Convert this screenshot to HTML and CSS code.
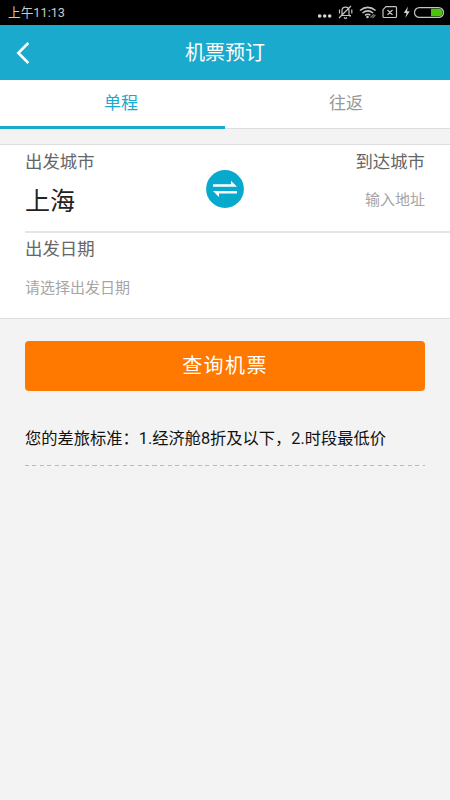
FILE: index.html
```html
<!DOCTYPE html>
<html lang="zh-CN">
<head>
	<title>机票预订</title>
	<meta charset="utf-8">
	<meta name="viewport" content="width=device-width,initial-scale=1">
	<link rel="stylesheet" href="styles.css">
</head>
<body>
	<div class="status">
		<span class="time">上午11:13</span>
		<svg class="status-icons" width="132" height="25" viewBox="0 0 132 25" fill="none" stroke="#c4c4c4" stroke-width="1.2">
			<!-- more -->
			<g fill="#d4d4d4" stroke="none">
				<circle cx="1.7" cy="16" r="1.8"/>
				<circle cx="6.7" cy="16" r="1.8"/>
				<circle cx="11.7" cy="16" r="1.8"/>
			</g>
			<!-- muted bell -->
			<path d="M22.500 15.500h10.500M24 15v-4.500q0-3.300 3.500-3.300t3.500 3.300v4.500l1.500 1.500M26 17.500q1.500 1.800 3 0M33 6l-12 12M21.500 9.500v4M33.800 9.500v4"/>
			<!-- wifi -->
			<g stroke-width="1.6">
				<path d="M42 10.500q7.800-6.400 15.600 0M44.500 13q5.300-4.400 10.600 0M47 15.400q2.800-2.200 5.400-.2"/>
			</g>
			<circle cx="49.500" cy="17" r="1.300" fill="#c4c4c4" stroke="none"/>
			<path stroke="#777" d="M52.500 17.500l3.500-3.200M54.500 18l3-3"/>
			<!-- no sim -->
			<path d="M68 6.700h9.500q1 0 1 1v8.800q0 1-1 1h-11.500q-1 0-1-1v-6.800zM69.500 10l5 4.800M74.500 10l-5 4.800"/>
			<!-- battery -->
			<path d="M90 6.500l-4.200 6.500h2.700l-1.200 5 4.400-6.700h-2.700z" fill="#d4d4d4" stroke="none"/>
			<rect x="96.500" y="7.600" width="29" height="9.800" rx="4.900"/>
			<path d="M113 8.800h8q3.500 0 3.500 3.700t-3.500 3.700h-8z" fill="#4cc40b" stroke="none"/>
		</svg>
	</div>
	<header class="navbar">
		<svg class="back" width="14" height="22" viewBox="0 0 14 22" fill="none" stroke="#fff" stroke-width="2.600">
			<path d="M12.300 1L2.300 11l10 10"/>
		</svg>
		<h1>机票预订</h1>
	</header>
	<nav class="tabs">
		<a class="tab active">单程</a>
		<a class="tab">往返</a>
	</nav>
	<section class="form">
		<div class="cities">
			<div class="city">
				<span class="label">出发城市</span>
				<span class="value">上海</span>
			</div>
			<svg class="swap" width="38" height="38" viewBox="0 0 38 38">
				<circle cx="19" cy="19" r="18.900" fill="#07aacd"/>
				<path fill="#fff" d="M7 14.300h18v-3.500l6 6H7zM31 23.500H13v3.500l-6-6h24z"/>
			</svg>
			<div class="city to">
				<span class="label">到达城市</span>
				<span class="hint">输入地址</span>
			</div>
		</div>
		<div class="date">
			<span class="label">出发日期</span>
			<span class="hint">请选择出发日期</span>
		</div>
	</section>
	<button class="search">查询机票</button>
	<p class="standard">您的差旅标准：1.经济舱8折及以下，2.时段最低价</p>
</body>
</html>
```
FILE: styles.css
```css
* {
	box-sizing: border-box;
}

body {
	background: #f3f3f3;
	font-family: Roboto, "Noto Sans CJK SC", sans-serif;
	margin: 0;
	min-height: 800px;
}

.status {
	background: #000;
	color: #c8c8c8;
	display: flex;
	height: 25px;
	justify-content: space-between;
	padding-left: 8px;
}

.time {
	font-size: 12.7px;
	line-height: 25px;
}

.navbar {
	align-items: center;
	background: #19aacd;
	display: grid;
	grid-template-columns: 34px 1fr 34px;
	height: 55px;
	padding: 0 16px;
}

.navbar h1 {
	color: #fff;
	font-size: 20px;
	font-weight: 400;
	line-height: 54px;
	margin: 0;
	text-align: center;
}

.tabs {
	background: #fff;
	display: flex;
	height: 49px;
}

.tab {
	border-bottom: 1px solid #dedede;
	color: #999;
	flex: 1;
	font-size: 17px;
	line-height: 47px;
	padding-left: 17px;
	text-align: center;
}

.tab.active {
	border-bottom: 3px solid #19aacd;
	color: #19aacd;
}

.form {
	background: #fff;
	border-bottom: 1px solid #dedede;
	border-top: 1px solid #dedede;
	height: 175px;
	margin-top: 15px;
	padding-left: 25px;
}

.cities {
	border-bottom: 2px solid #e5e5e5;
	display: flex;
	height: 88px;
	justify-content: space-between;
	padding-right: 25px;
}

.city, .date {
	display: flex;
	flex-direction: column;
}

.city {
	width: 120px;
}

.to {
	text-align: right;
}

.label {
	color: #666;
	font-size: 17.4px;
	line-height: 34px;
}

.date .label {
	line-height: 33px;
}

.value {
	color: #222;
	font-size: 25px;
	line-height: 46px;
}

.hint {
	color: #a5a5a5;
	font-size: 15px;
	line-height: 42px;
}

.date .hint {
	line-height: 44px;
}

.swap {
	margin-top: 25px;
}

.search {
	background: #ff7800;
	border: 0;
	border-radius: 4px;
	color: #fff;
	display: block;
	font: 20px/50px Roboto, "Noto Sans CJK SC", sans-serif;
	height: 50px;
	letter-spacing: 1.4px;
	margin: 22px 25px 0;
	padding: 0;
	width: 400px;
}

.standard {
	background: repeating-linear-gradient(90deg, #bbb 0, #bbb 4px, transparent 4px, transparent 7.5px) bottom / 100% 1px no-repeat;
	color: #111;
	font-size: 16.25px;
	height: 75px;
	line-height: 95px;
	margin: 0 25px;
}
```
